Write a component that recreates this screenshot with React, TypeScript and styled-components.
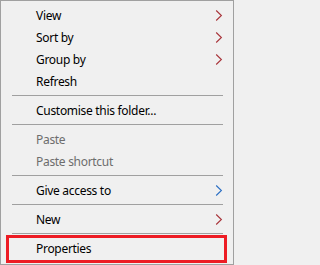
import React, { FC } from 'react';
import styled, { createGlobalStyle } from 'styled-components';

type Entry =
  | { kind: 'item'; label: string; disabled?: boolean; arrow?: 'red' | 'blue'; marked?: boolean }
  | { kind: 'sep' };

const entries: Entry[] = [
  { kind: 'item', label: 'View', arrow: 'red' },
  { kind: 'item', label: 'Sort by', arrow: 'red' },
  { kind: 'item', label: 'Group by', arrow: 'red' },
  { kind: 'item', label: 'Refresh' },
  { kind: 'sep' },
  { kind: 'item', label: 'Customise this folder...' },
  { kind: 'sep' },
  { kind: 'item', label: 'Paste', disabled: true },
  { kind: 'item', label: 'Paste shortcut', disabled: true },
  { kind: 'sep' },
  { kind: 'item', label: 'Give access to', arrow: 'blue' },
  { kind: 'sep' },
  { kind: 'item', label: 'New', arrow: 'red' },
  { kind: 'sep' },
  { kind: 'item', label: 'Properties', marked: true },
];

const Chevron: FC<{ tone: 'red' | 'blue' }> = ({ tone }) => (
  <svg width="8" height="11" viewBox="0 0 8 11">
    <path
      d="M1.2 0.5 L6.4 5.5 L1.2 10.5"
      fill="none"
      stroke={tone === 'red' ? '#a8343a' : '#2b6fc4'}
      strokeWidth="1.1"
    />
  </svg>
);

const App: FC = () => (
  <>
    <GlobalStyle />
    <Menu>
      {entries.map((e, i) =>
        e.kind === 'sep' ? (
          <Separator key={i} />
        ) : (
          <Item key={i} $disabled={e.disabled}>
            <Label>{e.label}</Label>
            {e.arrow && (
              <Arrow>
                <Chevron tone={e.arrow} />
              </Arrow>
            )}
            {e.marked && <Highlight />}
          </Item>
        )
      )}
    </Menu>
  </>
);

const GlobalStyle = createGlobalStyle`
  html, body {
    margin: 0;
    padding: 0;
    background: #f0f0f0;
  }
  * {
    box-sizing: border-box;
  }
`;

const Menu = styled.div`
  width: 234px;
  height: 265px;
  background: #f0f0f0;
  border: 1px solid #a0a0a0;
  padding: 3px 1px 0 1px;
  display: flex;
  flex-direction: column;
  font-family: 'Noto Sans', 'Open Sans', sans-serif;
  font-size: 12px;
  letter-spacing: -0.3px;
  color: #000;
  overflow: hidden;
`;

const Item = styled.div<{ $disabled?: boolean }>`
  position: relative;
  height: 22px;
  flex: none;
  display: flex;
  align-items: center;
  padding: 2px 9px 0 34px;
  color: ${({ $disabled }) => ($disabled ? '#6d6d6d' : '#000')};
`;

const Label = styled.span`
  flex: 1;
  white-space: nowrap;
  line-height: 20px;
`;

const Arrow = styled.span`
  display: flex;
  align-items: center;
  width: 8px;
  height: 11px;
  margin-top: -2px;
`;

const Separator = styled.div`
  flex: none;
  height: 7px;
  padding: 3px 9px 0 10px;
  &::before {
    content: '';
    display: block;
    height: 1px;
    background: #a0a0a0;
  }
`;

const Highlight = styled.div`
  position: absolute;
  left: 4px;
  right: 5px;
  top: -2px;
  bottom: -4px;
  border: 3px solid #ed1c24;
  pointer-events: none;
`;

export default App;
